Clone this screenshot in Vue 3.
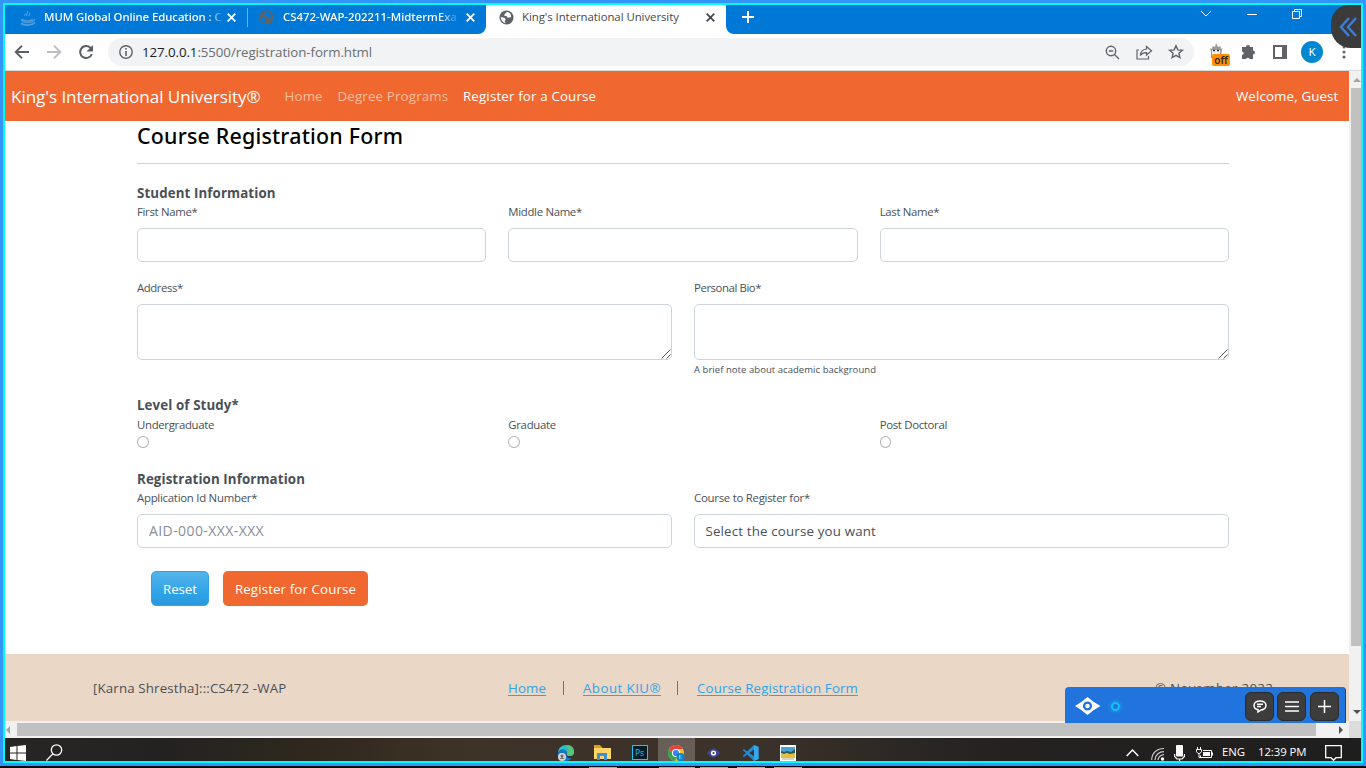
<script setup>
const names = ['First Name*', 'Middle Name*', 'Last Name*']
const levels = ['Undergraduate', 'Graduate', 'Post Doctoral']
</script>

<template>
  <div class="screen">
    <div class="frame">
      <div class="desk">
        <header class="tabs">
          <div class="tab first">
            <svg class="fav" width="16" height="16" viewBox="0 0 16 16" fill="none" stroke="#4f9fdf" stroke-width="1.1"><path d="M7 1c2 2-2 3 0 5M9.5 2.5c1 1.5-1.5 2 0 3.500M5 3.500c1 1-1 1.500 0 2.500M1 9c1 5 12 5 14 0" /><path d="M2 9.500c3 2 8 2 11 0M1 13.500c4 2.500 11 2 14-1" stroke-width="1.6" /></svg>
            <span class="tabname fade">MUM Global Online Education : C</span>
            <svg class="x" width="9" height="9" viewBox="0 0 9 9"><path d="M.7.7l7.600 7.600M8.300.7L.7 8.300" stroke="#fff" stroke-width="1.8" /></svg>
          </div>
          <div class="tab second">
            <svg class="fav" width="15" height="15" viewBox="0 0 16 16"><circle cx="8" cy="8" r="7.500" fill="#5f6368" /><path d="M9 2.200c-2 .3-1.500 1.600-3 2.300-1 .5-.5 1.700.6 1.800 1.600 0 2.400.7 2.400 2 1.500.2 2.200-1 3.800-.2.800-3-1-5.300-3.800-5.900zM2 7.500c2 0 4 1 4.800 1.800.6.800-.6 1.300-.6 2.700 0 .8.700.9.600 1.900C4 13.400 1.800 11 2 7.500z" fill="#0078d7" /></svg>
            <span class="tabname fade">CS472-WAP-202211-MidtermExa</span>
            <svg class="x" width="9" height="9" viewBox="0 0 9 9"><path d="M.7.7l7.600 7.600M8.300.7L.7 8.300" stroke="#fff" stroke-width="1.8" /></svg>
          </div>
          <div class="tab active">
            <svg class="fav" width="15" height="15" viewBox="0 0 16 16"><circle cx="8" cy="8" r="7.500" fill="#5f6368" /><path d="M9 2.200c-2 .3-1.500 1.600-3 2.300-1 .5-.5 1.700.6 1.800 1.600 0 2.400.7 2.400 2 1.500.2 2.200-1 3.800-.2.800-3-1-5.300-3.800-5.900zM2 7.500c2 0 4 1 4.800 1.800.6.800-.6 1.300-.6 2.700 0 .8.700.9.600 1.900C4 13.400 1.800 11 2 7.500z" fill="#fff" /></svg>
            <span class="tabname">King's International University</span>
            <svg class="x" width="9" height="9" viewBox="0 0 9 9"><path d="M.7.7l7.600 7.600M8.300.7L.7 8.300" stroke="#45494d" stroke-width="1.8" /></svg>
          </div>
          <div class="after">
            <svg class="plus" width="12" height="12" viewBox="0 0 12 12"><path d="M6 0v12M0 6h12" stroke="#fff" stroke-width="2" /></svg>
            <div class="winctl">
              <svg width="12" height="8" viewBox="0 0 12 8" fill="none" stroke="#fff"><path d="M1 1l5 5 5-5" /></svg>
              <svg width="10" height="8" viewBox="0 0 10 8"><path d="M0 4.500h10" stroke="#fff" /></svg>
              <svg width="11" height="11" viewBox="0 0 11 11" fill="none" stroke="#fff"><path d="M.5 2.500h7v7h-7zM2.500 2.500v-2h7v7h-2" /></svg>
            </div>
          </div>
        </header>

        <div class="toolbar">
          <div class="nav">
            <svg width="16" height="16" viewBox="0 0 16 16" fill="none" stroke="#5a5e62" stroke-width="1.9"><path d="M15 8H2M8 1.700L1.700 8 8 14.300" /></svg>
            <svg width="16" height="16" viewBox="0 0 16 16" fill="none" stroke="#bcbdc0" stroke-width="1.9"><path d="M1 8h13M8 1.700L14.300 8 8 14.300" /></svg>
            <svg width="16" height="16" viewBox="0 0 16 16"><path d="M13 4.500A6 6 0 1 0 13.800 10" fill="none" stroke="#5a5e62" stroke-width="2" /><path d="M15 1v6.500H8.500z" fill="#5a5e62" /></svg>
          </div>
          <div class="omni">
            <svg class="info" width="14" height="14" viewBox="0 0 14 14"><circle cx="7" cy="7" r="6.200" fill="none" stroke="#5f6368" stroke-width="1.4" /><path d="M7 3v1.600M7 6v5" stroke="#5f6368" stroke-width="1.6" /></svg>
            <span class="url"><b>127.0.0.1</b>:5500/registration-form.html</span>
            <i class="cell"><svg width="15" height="15" viewBox="0 0 15 15" fill="none" stroke="#5f6368" stroke-width="1.400"><circle cx="6" cy="6" r="4.700" /><path d="M3.800 6h4.400M9.500 9.500l4.500 4.500" /></svg></i>
            <i class="cell"><svg width="17" height="15" viewBox="0 0 17 15" fill="none" stroke="#5f6368" stroke-width="1.200"><path d="M3 5H1v9h11.500v-3" /><path d="M10.500 1.500l5 4.300-5 4.300V7.600C7.500 7.500 5.500 8.500 4.300 10.500 4.600 7 7 4.300 10.500 4z" /></svg></i>
            <i class="cell"><svg width="16" height="16" viewBox="0 0 16 16" fill="none" stroke="#5f6368" stroke-width="1.400"><path d="M8 1.800l1.800 4.100 4.500.4-3.400 2.900 1 4.400L8 11.300l-3.900 2.300 1-4.400-3.400-2.900 4.500-.4z" /></svg></i>
          </div>
          <div class="tools">
            <i class="cell ext"><svg width="14" height="15" viewBox="0 0 14 15"><path d="M1 5l2 1 .5-3L6 4l1-4 2 4 2.500-1 .5 3 1.500-1-1 4v6H2V9z" fill="#9b9b9b" /><path d="M3 7h8v6H3z" fill="#eee" /><path d="M4 7.500h2M8 7.500h2" stroke="#333" stroke-width="1.400" /></svg><em>off</em></i>
            <i class="cell"><svg width="16" height="16" viewBox="0 0 16 16"><path d="M6 3a2 2 0 0 1 4 0h3v3.500a2 2 0 0 1 0 4V15H9.500a1.700 1.700 0 0 0-3.300 0H2v-4a1.700 1.700 0 0 0 0-3.400V3z" fill="#5f6368" /></svg></i>
            <i class="cell"><svg width="14" height="14" viewBox="0 0 14 14"><path d="M0 0h14v14H0z" fill="#5f6368" /><path d="M2 2h7v10H2z" fill="#fff" /></svg></i>
            <i class="cell"><span class="avatar">K</span></i>
            <i class="cell"><svg width="4" height="14" viewBox="0 0 4 14" fill="#5f6368"><circle cx="2" cy="2" r="1.500" /><circle cx="2" cy="7" r="1.500" /><circle cx="2" cy="12" r="1.500" /></svg></i>
          </div>
        </div>

        <div class="view">
          <div class="page">
            <nav class="navbar">
              <span class="brand">King's International University®</span>
              <a class="dim">Home</a>
              <a class="dim">Degree Programs</a>
              <a>Register for a Course</a>
              <span class="guest">Welcome, Guest</span>
            </nav>
            <main>
              <h1>Course Registration Form</h1>
              <h2>Student Information</h2>
              <div class="row three">
                <div v-for="n in names" :key="n"><label>{{ n }}</label><div class="field"></div></div>
              </div>
              <div class="row two areas">
                <div>
                  <label>Address*</label>
                  <div class="field area"><svg width="10" height="10" viewBox="0 0 10 10" stroke="#555"><path d="M.5 9.500l9-9M5.500 9.500l4-4" /></svg></div>
                </div>
                <div>
                  <label>Personal Bio*</label>
                  <div class="field area"><svg width="10" height="10" viewBox="0 0 10 10" stroke="#555"><path d="M.5 9.500l9-9M5.500 9.500l4-4" /></svg></div>
                  <small>A brief note about academic background</small>
                </div>
              </div>
              <h2 class="level">Level of Study*</h2>
              <div class="row three radios">
                <div v-for="l in levels" :key="l"><label>{{ l }}</label><span class="radio"></span></div>
              </div>
              <h2 class="reg">Registration Information</h2>
              <div class="row two">
                <div><label>Application Id Number*</label><div class="field ph">AID-000-XXX-XXX</div></div>
                <div><label>Course to Register for*</label><div class="field sel">Select the course you want</div></div>
              </div>
              <div class="buttons"><button class="reset">Reset</button><button class="submit">Register for Course</button></div>
            </main>
            <footer>
              <span class="author">[Karna Shrestha]:::CS472 -WAP</span>
              <span class="home"><a>Home</a></span><span class="bar"></span>
              <span class="about"><a>About KIU®</a></span><span class="bar"></span>
              <a class="form">Course Registration Form</a>
              <span class="copy">© November 2022</span>
            </footer>
          </div>
          <div class="vscroll">
            <svg width="8" height="4" viewBox="0 0 8 4"><path d="M0 4l4-4 4 4z" fill="#a3a3a3" /></svg>
            <div class="vthumb"></div>
            <svg class="down" width="8" height="4" viewBox="0 0 8 4"><path d="M0 0h8L4 4z" fill="#505050" /></svg>
          </div>
        </div>

        <div class="hscroll">
          <svg class="la" width="4" height="8" viewBox="0 0 4 8"><path d="M4 0v8L0 4z" fill="#a3a3a3" /></svg>
          <div class="hthumb"></div>
          <svg class="ra" width="4" height="8" viewBox="0 0 4 8"><path d="M0 0v8l4-4z" fill="#505050" /></svg>
          <div class="corner"></div>
        </div>

        <div class="taskbar">
          <svg class="win" width="16" height="16" viewBox="0 0 16 16" fill="#fff"><path d="M0 2l6.500-1v6.500H0zM7.500.9L16 0v7.500H7.500zM0 8.500h6.500v6.400L0 14zM7.500 8.500H16V16l-8.500-1z" /></svg>
          <svg class="find" width="17" height="17" viewBox="0 0 17 17" fill="none" stroke="#fff" stroke-width="1.300"><circle cx="10.500" cy="6" r="5.200" /><path d="M6.800 9.900L.5 16.500" /></svg>
          <div class="apps">
            <i>
              <svg width="17" height="16" viewBox="0 0 17 16"><path d="M1 8C1 3 5 0 9 0c5 0 8 3 8 7 0 3-2 4-5 4-2 0-3-1-2-3-1-3-6-3-9 0z" fill="#2fc1c5" /><path d="M10 0c5 0 7 3 7 7 0 3-2 4-5 4-2 0-2-1-1-3 1-4-1-6-1-8z" fill="#55c67a" /><path d="M1 7c3-4 8-3 9 0-2 4 1 7 5 6-3 4-10 4-12 0-2-2-2-4-2-6z" fill="#1679c8" /><circle cx="5" cy="12" r="4" fill="#d5d5d5" /><circle cx="5" cy="11" r="1.500" fill="#666" /><path d="M2.500 14c1-2 4-2 5 0" fill="#777" /></svg>
            </i>
            <i>
              <svg width="17" height="15" viewBox="0 0 17 15"><path d="M0 1h7l1 2h9v11H0z" fill="#ffd568" /><path d="M0 0h6l2 3H0z" fill="#dca01c" /><path d="M3 15V8h10v7h-3v-4H6v4z" fill="#3d8fd8" /></svg>
            </i>
            <i><span class="ps">Ps</span></i>
            <i class="on">
              <svg width="17" height="16" viewBox="0 0 17 16"><circle cx="8" cy="8" r="8" fill="#f8c12d" /><path d="M1 4a8 8 0 0 1 14 0H8a4 4 0 0 0-4 5z" fill="#e5453a" /><path d="M1 4l4 6 4 2-2 4A8 8 0 0 1 1 4z" fill="#34a553" /><circle cx="8" cy="8" r="4" fill="#fff" /><circle cx="8" cy="8" r="3.100" fill="#3c83ef" /><circle cx="12.500" cy="12" r="4" fill="#0288d1" /><path d="M11.500 10v4M13.500 10l-2 2 2 2" stroke="#8fd0f5" fill="none" stroke-width=".8" /></svg>
            </i>
            <i>
              <svg width="13" height="10" viewBox="0 0 13 10"><path d="M0 5l3-3 3.500-2L10 2l3 3-3 3-3.500 2L3 8z" fill="#40449d" /><circle cx="6.500" cy="5" r="2.600" fill="#fff" /><circle cx="6.500" cy="5" r="1" fill="#333" /></svg>
            </i>
            <i>
              <svg width="17" height="16" viewBox="0 0 17 16"><path d="M12 0l4.500 2v12L12 16 5 9.500 2 12 .5 11 4 8 .5 5 2 4l3 2.500zM12 4.500L7.500 8l4.500 3.500z" fill="#2489ce" fill-rule="evenodd" /><path d="M12 0l4.500 2v12L12 16z" fill="#36a7ef" /></svg>
            </i>
            <i>
              <svg width="16" height="16" viewBox="0 0 16 16"><path d="M0 0h16v16H0z" fill="#fff" /><path d="M1 2h14v6H1z" fill="#4aa3d0" /><path d="M1 8l4 1 5-2 5 1v5H1z" fill="#e3bd48" /><path d="M1 6l3 1 3-1 4 1 4-3v4l-5 1-3-1-3 1-3-1z" fill="#275c56" /><path d="M2 13.500h12v1H2z" fill="#b9a77d" /></svg>
            </i>
          </div>
          <div class="tray">
            <svg class="up" width="13" height="8" viewBox="0 0 13 8" fill="none" stroke="#fff" stroke-width="1.400"><path d="M.7 7l5.800-6 5.800 6" /></svg>
            <svg class="wifi" width="14" height="14" viewBox="0 0 14 14" fill="none" stroke="#ccc" stroke-width="1.200"><path d="M.7 13C.7 6 6 1.500 13 1.500M4 13c0-5 4-8.300 9-8.300M7 13c0-3 3-5.300 6-5.300" /><circle cx="11.500" cy="12" r="1.700" fill="#fff" stroke="none" /></svg>
            <svg class="mic" width="11" height="16" viewBox="0 0 11 16"><rect x="2" width="7" height="11.500" rx="1" fill="#fff" /><path d="M.6 9v2.500L3 14h5l2.400-2.500V9M5.500 14v2" fill="none" stroke="#fff" stroke-width="1.200" /></svg>
            <svg class="batt" width="17" height="14" viewBox="0 0 17 14" fill="none" stroke="#fff"><path d="M7 4.500h8.500v7h-11v-2M16.500 6.500v3M1.500 1v2M4.500 1v2M.5 3.500h5v2l-1.500 2h-2L.5 5.500zM3 7.500v4h2" /><path d="M7 6h7v4H7z" fill="#fff" stroke="none" /></svg>
            <span class="eng">ENG</span><span class="time">12:39 PM</span>
            <svg class="note" width="17" height="16" viewBox="0 0 17 16" fill="none" stroke="#fff" stroke-width="1.300"><path d="M.7.700h15.600v12H11L8.500 15.300 6 12.700H.7z" /></svg>
          </div>
        </div>

        <div class="edge"><svg width="18" height="20" viewBox="0 0 18 20" fill="none" stroke="#3d7edb" stroke-width="2.400"><path d="M10 1L2 10l8 9M17 1l-8 9 8 9" /></svg></div>
        <div class="widget">
          <svg class="eye" width="26" height="18" viewBox="0 0 26 18"><path d="M0 9Q7 5 12.500 0 18 5 25.500 9 18 13 12.500 18 7 13 0 9z" fill="#fff" /><circle cx="12.500" cy="9" r="3.400" fill="#fff" stroke="#2173dd" stroke-width="2.300" /></svg>
          <span class="dot"></span>
          <b><svg width="14" height="13" viewBox="0 0 14 13" fill="none" stroke="#fff" stroke-width="1.500"><path d="M7 1c3.500 0 6 1.800 6 4.400S10.500 10 8 10l-3 2v-2.300C2.500 9.200 1 7.600 1 5.400 1 2.800 3.500 1 7 1zM4 4.300h6M4 6.600h4" /></svg></b>
          <b><svg width="14" height="11" viewBox="0 0 14 11" stroke="#fff" stroke-width="1.500"><path d="M0 1h14M0 5.500h14M0 10h14" /></svg></b>
          <b class="gap"><svg width="13" height="13" viewBox="0 0 13 13" stroke="#fff" stroke-width="1.500"><path d="M0 6.500h13M6.500 0v13" /></svg></b>
        </div>
      </div>
    </div>
    <svg class="strip" width="1366" height="2" viewBox="0 0 1366 2" shape-rendering="crispEdges"><path d="M0 0h1366v2H0z" fill="#0b0b0c" /><path d="M589 1.500h28M659 1.500h36M700 1.500h28M737 1.500h28M774 1.500h28" stroke="#76b9ed" /></svg>
  </div>
</template>

<style>
body { overflow: hidden; }
</style>
<style scoped>
* { box-sizing: border-box; }
svg { display: block; flex: none; }
i, em, b { font-style: normal; font-weight: 400; }
.screen { width: 1366px; height: 768px; font-family: "Open Sans", "Noto Sans", sans-serif; color: #495057; font-size: 13.3px; letter-spacing: .15px; white-space: nowrap; }
.frame { height: 766px; border: 3px solid #3395fa; }
.desk { height: 760px; border: 2px solid #00fcfc; position: relative; overflow: hidden; display: flex; flex-direction: column; background: #fff; }

.tabs { height: 29px; display: flex; background: #fff; flex: none; }
.tab { display: flex; align-items: center; padding-bottom: 4px; font-size: 11.4px; letter-spacing: .07px; color: #fff; background: #0078d7; }
.tabname { overflow: hidden; line-height: 20px; margin-bottom: 2px; }
.x { margin-left: auto; }
.first { width: 242px; padding-left: 15px; padding-right: 10px; border-right: 1px solid #0078d7; position: relative; }
.first::after { content: ""; position: absolute; right: -2px; top: 3px; width: 1px; height: 19px; background: #6fb1e6; }
.first .tabname { width: 180px; margin-left: 8px; font-family: "Noto Sans", sans-serif; font-weight: 500; letter-spacing: -.06px; mask-image: linear-gradient(90deg, #000 165px, transparent 180px); }
.second { width: 239px; padding-left: 12px; padding-right: 11px; border-bottom-right-radius: 8px; }
.second .tabname { width: 177px; margin-left: 9px; font-family: "Noto Sans", sans-serif; font-weight: 500; letter-spacing: 0; }
.fade { mask-image: linear-gradient(90deg, #000 88%, transparent); }
.active { width: 240px; padding-left: 13px; padding-right: 11px; background: #fff; color: #45494d; letter-spacing: -.05px; }
.active .tabname { margin-left: 8px; }
.after { flex: 1; background: #0078d7; border-bottom-left-radius: 8px; display: flex; align-items: center; padding: 0 58px 5px 16px; }
.winctl { margin-left: auto; display: flex; align-items: center; gap: 35px; padding-bottom: 6px; }

.toolbar { height: 37px; border-bottom: 1px solid #d6d8db; display: flex; align-items: center; padding-left: 9px; flex: none; }
.nav { display: flex; gap: 16px; width: 94px; }
.omni { width: 1086px; height: 28px; border-radius: 14px; background: #f1f3f4; display: flex; align-items: center; padding: 0 2px 0 11px; }
.url { margin-left: 9px; color: #6a6e72; letter-spacing: -.08px; margin-right: auto; }
.url b { color: #202124; }
.cell { width: 32px; height: 28px; display: flex; align-items: center; justify-content: center; flex: none; position: relative; }
.tools { display: flex; padding-left: 6px; }
.ext svg { margin-bottom: 4px; }
.ext em { position: absolute; left: 12px; top: 16px; width: 18px; height: 12px; border-radius: 2px; background: #ff8c05; color: #222; font-size: 10px; line-height: 12px; text-align: center; font-weight: 600; letter-spacing: 0; }
.avatar { width: 22px; height: 22px; border-radius: 50%; background: #0288d1; color: #fff; font-size: 11.500px; line-height: 22px; text-align: center; }

.view { display: flex; height: 650px; flex: none; }
.page { width: 1344px; display: flex; flex-direction: column; }
.navbar { height: 50px; background: #f0672f; color: #fff; display: flex; align-items: center; padding: 0 10.5px 0 6px; }
.brand { font-size: 17.100px; letter-spacing: -.07px; width: 273.500px; }
.navbar a { margin-right: 14.700px; letter-spacing: .17px; }
.navbar .dim { color: #fabf9f; }
.guest { margin-left: auto; }
main { padding: 0 120px 0 132px; height: 533px; }
h1 { margin: 0; height: 43px; line-height: 30px; font-family: "Noto Sans", sans-serif; font-size: 21.400px; font-weight: 500; letter-spacing: .2px; color: #000; border-bottom: 1px solid #cfd2d4; }
h2 { margin: 19px 0 0; font-size: 13.300px; line-height: 20px; font-weight: 700; letter-spacing: .11px; }
.row { display: grid; column-gap: 22px; }
.three { grid-template-columns: repeat(3, 1fr); }
.two { grid-template-columns: 1fr 1fr; }
label { display: block; font-size: 11.400px; line-height: 18px; letter-spacing: -.32px; margin-bottom: 7px; }
.two label { letter-spacing: -.26px; }
.areas label { letter-spacing: -.43px; }
.field { height: 34px; border: 1px solid #ced4da; border-radius: 5px; padding-left: 11px; line-height: 32px; background: #fff; }
.areas { margin-top: 17px; height: 99px; align-items: start; }
.area { height: 56px; display: flex; align-items: flex-end; justify-content: flex-end; padding: 1px 0 0 1px; }
small { display: block; font-size: 9.500px; line-height: 14px; margin-top: 3px; letter-spacing: .05px; }
.level { margin-top: 17px; }
.radios { padding-top: 1px; }
.radios label { margin-bottom: 2px; }
.radio { display: block; width: 11.500px; height: 12px; border: 1px solid #b0b2b4; border-radius: 50%; }
.reg { margin-top: 21px; }
.ph { color: #868e96; font-size: 14px; letter-spacing: .41px; }
.sel { padding-left: 10.500px; letter-spacing: .17px; }
.buttons { display: flex; gap: 14px; margin: 23px 0 0 14px; }
button { height: 35px; padding: 0; border: 0; border-radius: 5px; color: #fff; font: inherit; letter-spacing: .12px; }
.reset { width: 58px; border: 1px solid #2fa4e7; background: linear-gradient(#54b4eb, #2fa4e7 60%, #2a98dc); letter-spacing: -.04px; }
.submit { width: 145px; background: #f0672f; }
footer { height: 67px; background: #ead7c6; display: flex; align-items: center; padding-left: 88px; }
.author { width: 415px; }
footer a { color: #2fa4e7; text-decoration: underline; text-underline-offset: 2px; }
.home { width: 55px; }
.about { width: 94px; letter-spacing: .45px; }
.bar { width: 1px; height: 14px; background: #8a6a5c; margin-right: 19px; }
.form { letter-spacing: .14px; }
.copy { margin-left: auto; width: 194px; letter-spacing: .28px; }

.vscroll { width: 12px; background: #f1f1f1; display: flex; flex-direction: column; align-items: flex-end; padding-top: 7px; }
.vthumb { width: 10px; height: 558px; background: #c1c1c1; margin-top: 6px; }
.down { margin-top: 64px; }
.hscroll { height: 17px; background: #f1f1f1; display: flex; align-items: center; flex: none; }
.la { margin: 0 7px 0 1px; }
.hthumb { width: 1299px; height: 13px; background: #c1c1c1; }
.ra { margin-left: 23px; }
.corner { margin-left: auto; width: 12px; height: 17px; background: #dcdcdc; }

.taskbar { height: 23px; flex: none; overflow: hidden; display: flex; align-items: flex-start; background: linear-gradient(90deg, #282624, #242220 12%, #30291f 24%, #3e3329 34%, #3b322b 55%, #252220 72%, #1e1e1e); }
.win { margin: 7px 0 0 5px; }
.find { margin: 6px 0 0 20px; }
.apps { display: flex; margin-left: 484px; }
.apps i { width: 37px; height: 23px; display: flex; justify-content: center; padding-top: 7px; }
.apps i:nth-child(5) { padding-top: 10px; }
.apps .on { background: #665e57; }
.ps { width: 16px; height: 15px; border: 1px solid #20c4f4; background: #001d2a; color: #20c4f4; font-size: 8.500px; line-height: 13px; text-align: center; letter-spacing: 0; }
.tray { margin-left: auto; display: flex; align-items: flex-start; color: #fff; font-size: 11.400px; padding-right: 19px; height: 23px; }
.up { margin: 11px 12px 0 0; }
.wifi { margin: 9px 9px 0 0; }
.mic { margin: 7px 11px 0 0; }
.batt { margin: 8px 9px 0 0; }
.eng, .time { line-height: 20px; margin-top: 4px; letter-spacing: -.1px; width: 36px; }
.time { width: 67px; }
.note { margin-top: 7px; }

.edge { position: absolute; right: 0; top: 0; width: 30px; height: 43px; border-radius: 18px 0 0 20px; background: #3b3b3b; display: flex; align-items: center; padding-left: 8px; }
.widget { position: absolute; left: 1060px; top: 682px; width: 281px; height: 36px; background: #2173dd; border-right: 1px solid #34404e; border-radius: 4px 4px 0 0; display: flex; align-items: center; padding-top: 2px; }
.eye { margin: 0 0 1px 10px; }
.dot { width: 9px; height: 9px; border: 2.500px solid #12c3f1; border-radius: 50%; box-shadow: 0 0 5px #12b6f0; margin: 0 125px 0 10px; }
.widget b { width: 29px; height: 29px; border-radius: 6px; border: 1px solid #2b2b2b; background: #3d3d3d; display: flex; align-items: center; justify-content: center; margin-right: 3px; flex: none; }
.widget .gap { margin-left: 1px; }
.strip { display: block; }
</style>
